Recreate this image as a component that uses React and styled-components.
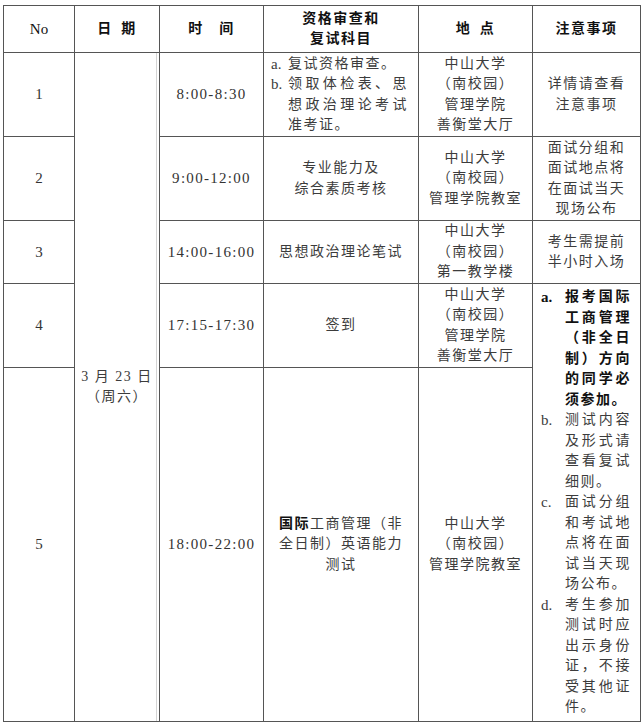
import React from "react";
import styled, { createGlobalStyle } from "styled-components";

const GlobalStyle = createGlobalStyle`
  html, body {
    margin: 0;
    padding: 0;
    background: #fff;
  }
  body {
    font-family: "Liberation Serif", "Noto Sans CJK SC", serif;
  }
`;

const Page = styled.div`
  padding: 5px 0 0 3px;
`;

const Table = styled.table`
  border-collapse: collapse;
  table-layout: fixed;
  width: 637px;
  color: #3c3c3c;
  font-size: 14px;
  line-height: 20.5px;
  letter-spacing: 1.5px;
`;

const Row = styled.tr`
  height: ${({ $h }) => $h}px;
`;

const HeadCell = styled.th`
  border: 1px solid #555;
  padding: 0;
  text-align: center;
  vertical-align: middle;
  color: #111;
  font-weight: ${({ $latin }) => ($latin ? 400 : 700)};
  font-size: ${({ $latin }) => ($latin ? "15px" : "14px")};
  letter-spacing: ${({ $latin }) => ($latin ? "0" : "1.5px")};
`;

const Cell = styled.td`
  border: 1px solid #555;
  padding: 0;
  text-align: center;
  vertical-align: middle;
`;

const NumCell = styled(Cell)`
  font-size: 15px;
  letter-spacing: 0;
  color: #333;
`;

const TimeCell = styled(Cell)`
  font-size: 15px;
  letter-spacing: 1.3px;
  color: #333;
`;

const DateCell = styled(Cell)`
  box-shadow: inset -2px 0 0 #fff, inset -3px 0 0 #d4d4d4;
`;

const Strong = styled.span`
  font-weight: 700;
  color: #111;
`;

const List = styled.div`
  text-align: left;
  padding: 0 0 0 ${({ $pl }) => $pl}px;
`;

const Item = styled.div`
  display: flex;
  color: ${({ $bold }) => ($bold ? "#111" : "inherit")};
  font-weight: ${({ $bold }) => ($bold ? 700 : 400)};
`;

const Marker = styled.span`
  flex: none;
  width: ${({ $w }) => $w}px;
  font-family: "Liberation Serif", serif;
  font-size: 15px;
  letter-spacing: 0;
`;

const ItemText = styled.span`
  flex: none;
  width: ${({ $w }) => $w}px;
  text-align: justify;
`;

const Place = ({ last }) => (
  <>
    中山大学
    <br />
    （南校园）
    <br />
    {last}
  </>
);

export default function App() {
  return (
    <Page>
      <GlobalStyle />
      <Table>
        <colgroup>
          <col style={{ width: 71 }} />
          <col style={{ width: 85 }} />
          <col style={{ width: 104 }} />
          <col style={{ width: 155 }} />
          <col style={{ width: 114 }} />
          <col style={{ width: 108 }} />
        </colgroup>
        <thead>
          <Row $h={47}>
            <HeadCell $latin>No</HeadCell>
            <HeadCell>日&ensp;期</HeadCell>
            <HeadCell>时&emsp;间</HeadCell>
            <HeadCell>
              资格审查和
              <br />
              复试科目
            </HeadCell>
            <HeadCell>地&ensp;点</HeadCell>
            <HeadCell>注意事项</HeadCell>
          </Row>
        </thead>
        <tbody>
          <Row $h={84}>
            <NumCell>1</NumCell>
            <DateCell rowSpan={5}>
              3 月 23 日
              <br />
              （周六）
            </DateCell>
            <TimeCell>8:00-8:30</TimeCell>
            <Cell>
              <List $pl={7}>
                <Item>
                  <Marker $w={17}>a.</Marker>
                  <ItemText $w={120}>复试资格审查。</ItemText>
                </Item>
                <Item>
                  <Marker $w={17}>b.</Marker>
                  <ItemText $w={120}>领取体检表、思想政治理论考试准考证。</ItemText>
                </Item>
              </List>
            </Cell>
            <Cell>
              <Place
                last={
                  <>
                    管理学院
                    <br />
                    善衡堂大厅
                  </>
                }
              />
            </Cell>
            <Cell>
              详情请查看
              <br />
              注意事项
            </Cell>
          </Row>
          <Row $h={84}>
            <NumCell>2</NumCell>
            <TimeCell>9:00-12:00</TimeCell>
            <Cell>
              专业能力及
              <br />
              综合素质考核
            </Cell>
            <Cell>
              <Place last="管理学院教室" />
            </Cell>
            <Cell>
              面试分组和
              <br />
              面试地点将
              <br />
              在面试当天
              <br />
              现场公布
            </Cell>
          </Row>
          <Row $h={63}>
            <NumCell>3</NumCell>
            <TimeCell>14:00-16:00</TimeCell>
            <Cell>思想政治理论笔试</Cell>
            <Cell>
              <Place last="第一教学楼" />
            </Cell>
            <Cell>
              考生需提前
              <br />
              半小时入场
            </Cell>
          </Row>
          <Row $h={84}>
            <NumCell>4</NumCell>
            <TimeCell>17:15-17:30</TimeCell>
            <Cell>签到</Cell>
            <Cell>
              <Place
                last={
                  <>
                    管理学院
                    <br />
                    善衡堂大厅
                  </>
                }
              />
            </Cell>
            <Cell rowSpan={2}>
              <List $pl={8}>
                <Item $bold>
                  <Marker $w={24}>a.</Marker>
                  <ItemText $w={66}>报考国际工商管理（非全日制）方向的同学必须参加。</ItemText>
                </Item>
                <Item>
                  <Marker $w={24}>b.</Marker>
                  <ItemText $w={66}>测试内容及形式请查看复试细则。</ItemText>
                </Item>
                <Item>
                  <Marker $w={24}>c.</Marker>
                  <ItemText $w={66}>面试分组和考试地点将在面试当天现场公布。</ItemText>
                </Item>
                <Item>
                  <Marker $w={24}>d.</Marker>
                  <ItemText $w={66}>考生参加测试时应出示身份证，不接受其他证件。</ItemText>
                </Item>
              </List>
            </Cell>
          </Row>
          <Row $h={354}>
            <NumCell>5</NumCell>
            <TimeCell>18:00-22:00</TimeCell>
            <Cell>
              <Strong>国际</Strong>工商管理（非
              <br />
              全日制）英语能力
              <br />
              测试
            </Cell>
            <Cell>
              <Place last="管理学院教室" />
            </Cell>
          </Row>
        </tbody>
      </Table>
    </Page>
  );
}
